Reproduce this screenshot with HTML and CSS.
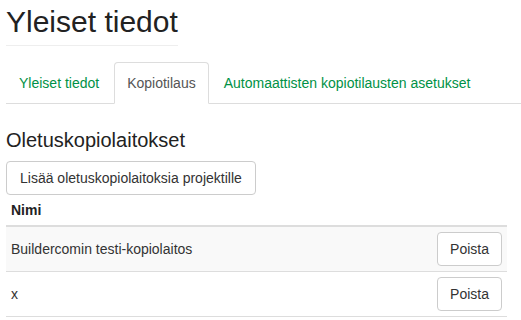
FILE: index.html
```
<!DOCTYPE html>
<html lang="fi">
<head>
<meta charset="utf-8">
<title>Yleiset tiedot</title>
<link rel="stylesheet" href="styles.css">
</head>
<body>
<div class="page">
  <h2 class="title">Yleiset tiedot</h2>
  <ul class="tabs">
    <li class="tab"><a href="#">Yleiset tiedot</a></li>
    <li class="tab active"><a href="#">Kopiotilaus</a></li>
    <li class="tab"><a href="#">Automaattisten kopiotilausten asetukset</a></li>
  </ul>
  <h3 class="section-title">Oletuskopiolaitokset</h3>
  <button class="btn btn-wide" type="button">Lisää oletuskopiolaitoksia projektille</button>
  <table class="table">
    <thead>
      <tr><th>Nimi</th><th></th></tr>
    </thead>
    <tbody>
      <tr><td>Buildercomin testi-kopiolaitos</td><td class="actions"><button class="btn" type="button">Poista</button></td></tr>
      <tr><td>x</td><td class="actions"><button class="btn" type="button">Poista</button></td></tr>
    </tbody>
  </table>
</div>
</body>
</html>
```
FILE: styles.css
```
html, body {
  margin: 0;
  padding: 0;
  background: #fff;
}
body {
  font-family: "Liberation Sans", Arial, Helvetica, sans-serif;
  font-size: 14px;
  line-height: 20px;
  color: #333;
}
.page {
  padding-left: 6px;
}
.title {
  display: inline-block;
  margin: 5px 0 0;
  padding-bottom: 7px;
  border-bottom: 1px solid #eee;
  font-size: 30px;
  line-height: 33px;
  font-weight: normal;
  color: #222;
}
.tabs {
  display: flex;
  list-style: none;
  margin: 16px 0 0;
  padding: 0;
  border-bottom: 1px solid #ddd;
}
.tab {
  margin-bottom: -1px;
}
.tab a {
  display: block;
  padding: 10px 12px;
  margin-right: 2px;
  line-height: 20px;
  border: 1px solid transparent;
  border-radius: 4px 4px 0 0;
  color: #009146;
  text-decoration: none;
}
.tab.active a {
  color: #555;
  background: #fff;
  border-color: #ddd;
  border-bottom-color: transparent;
}
.section-title {
  margin: 25px 0 10px;
  font-size: 20px;
  line-height: 22px;
  font-weight: normal;
  color: #222;
}
.btn {
  display: inline-block;
  margin: 0;
  padding: 6px 12px;
  font-family: inherit;
  font-size: 14px;
  line-height: 20px;
  color: #333;
  background: #fff;
  border: 1px solid #ccc;
  border-radius: 4px;
  cursor: pointer;
}
.btn-wide {
  padding: 6px 13px;
}
.table {
  width: calc(100% - 14px);
  border-collapse: collapse;
  border-spacing: 0;
}
.table th {
  text-align: left;
  padding: 5px;
  font-weight: bold;
  vertical-align: bottom;
  border-bottom: 2px solid #ddd;
  color: #222;
}
.table td {
  padding: 5px;
  vertical-align: middle;
  border-top: 1px solid #ddd;
}
.table tbody tr:nth-child(odd) {
  background: #f9f9f9;
}
.table tbody tr:last-child td {
  border-bottom: 1px solid #ddd;
}
.table .actions {
  text-align: right;
}
```
